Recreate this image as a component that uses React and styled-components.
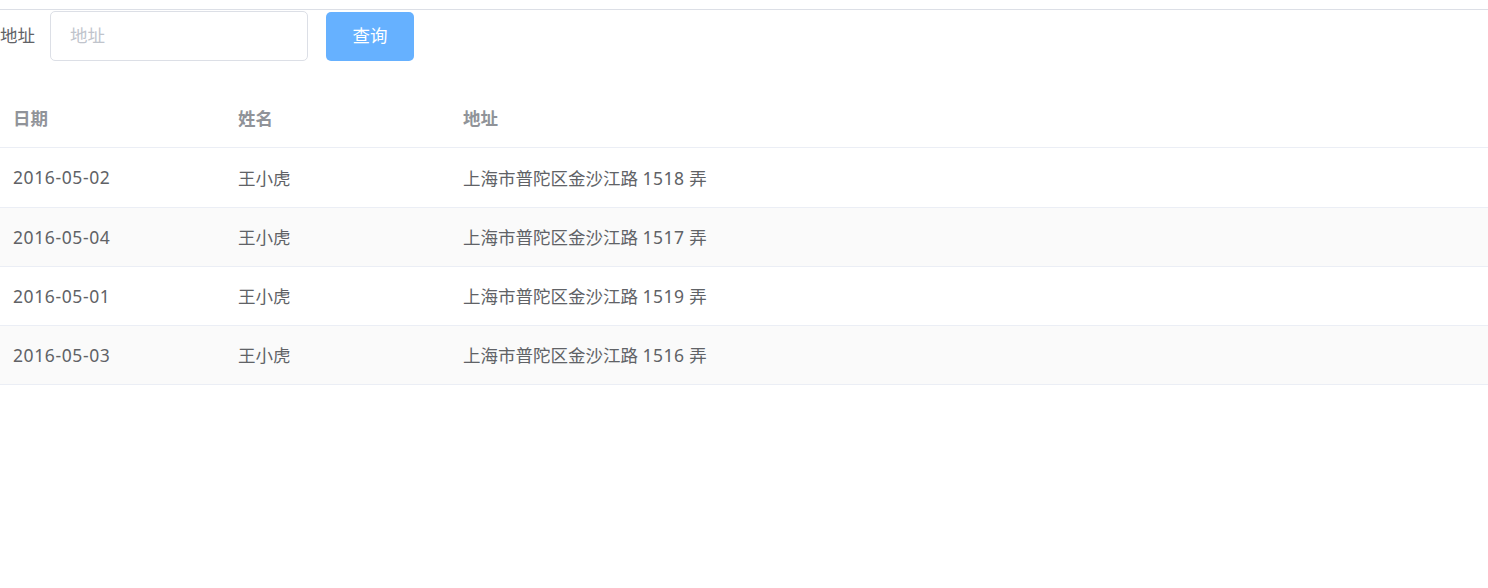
import React from "react";
import styled, { createGlobalStyle } from "styled-components";

const Global = createGlobalStyle`
  html, body { margin: 0; padding: 0; background: #fff; }
  body { font-family: "Noto Sans", "Noto Sans CJK SC", sans-serif; color: #606266; }
  * { box-sizing: border-box; }
`;

const Page = styled.div`
  padding-top: 9px;
`;

const TopRule = styled.div`
  height: 1px;
  background: #dcdfe6;
`;

const Form = styled.form`
  display: flex;
  align-items: flex-start;
  padding-top: 1px;
  margin-bottom: 28px;
`;

const FormItem = styled.div`
  display: flex;
  align-items: center;
  margin-right: 18px;
`;

const Label = styled.label`
  font-size: 17.5px;
  color: #606266;
  padding-right: 15px;
  line-height: 48px;
  padding-bottom: 2px;
`;

const Input = styled.input`
  width: 258px;
  height: 50px;
  border: 1px solid #dcdfe6;
  border-radius: 5px;
  padding: 0 19px 2px;
  font-size: 17.5px;
  font-family: inherit;
  color: #606266;
  outline: none;
  &::placeholder { color: #c0c4cc; }
`;

const Button = styled.button`
  width: 88px;
  height: 49px;
  margin-top: 1px;
  padding: 0 0 5px;
  border: none;
  border-radius: 5px;
  background: #66b1ff;
  color: #fff;
  font-size: 17.5px;
  font-family: inherit;
  cursor: pointer;
`;

const Table = styled.table`
  width: 100%;
  border-collapse: collapse;
  font-size: 17.5px;
`;

const Th = styled.th`
  text-align: left;
  font-weight: 700;
  color: #909399;
  height: 58px;
  padding: 0 13px;
  border-bottom: 1px solid #ebeef5;
  width: ${(p) => p.$w || "auto"};
`;

const Tr = styled.tr`
  background: ${(p) => (p.$striped ? "#fafafa" : "#fff")};
`;

const Td = styled.td`
  height: 59px;
  padding: 0 13px;
  color: #606266;
  border-bottom: 1px solid #ebeef5;
  letter-spacing: ${(p) => (p.$numeric ? "0.6px" : "normal")};
  tr:first-child > & { height: 60px; }
`;

const Num = styled.span`
  letter-spacing: 0.5px;
`;

const rows = [
  { date: "2016-05-02", name: "王小虎", no: "1518" },
  { date: "2016-05-04", name: "王小虎", no: "1517" },
  { date: "2016-05-01", name: "王小虎", no: "1519" },
  { date: "2016-05-03", name: "王小虎", no: "1516" },
];

export default function App() {
  return (
    <Page>
      <Global />
      <TopRule />
      <Form onSubmit={(e) => e.preventDefault()}>
        <FormItem>
          <Label>地址</Label>
          <Input placeholder="地址" />
        </FormItem>
        <Button type="submit">查询</Button>
      </Form>
      <Table>
        <thead>
          <tr>
            <Th $w="225px">日期</Th>
            <Th $w="225px">姓名</Th>
            <Th>地址</Th>
          </tr>
        </thead>
        <tbody>
          {rows.map((r, i) => (
            <Tr key={i} $striped={i % 2 === 1}>
              <Td $numeric>{r.date}</Td>
              <Td>{r.name}</Td>
              <Td>
                上海市普陀区金沙江路 <Num>{r.no}</Num> 弄
              </Td>
            </Tr>
          ))}
        </tbody>
      </Table>
    </Page>
  );
}
